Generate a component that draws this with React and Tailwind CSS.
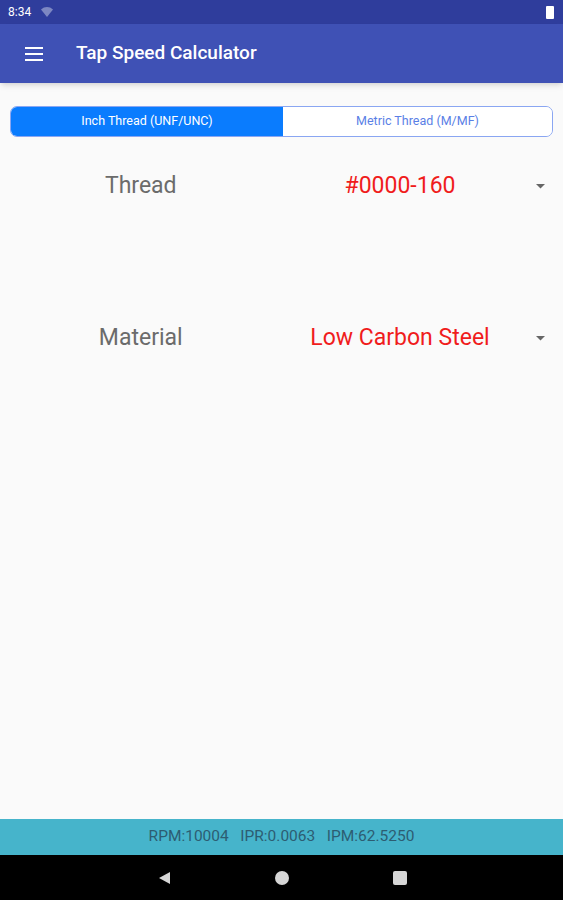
import React, { useState } from "react";

const font = { fontFamily: "Roboto, 'Noto Sans', sans-serif" };

const Row = ({ label, value, className }) => (
  <div className={`flex items-center h-[50px] ${className}`}>
    <div className="w-1/2 text-center text-[23px] text-[#6b6b6b]">{label}</div>
    <div className="w-1/2 flex items-center">
      <div className="w-[237px] text-center text-[23px] text-[#f01c1c]">{value}</div>
      <svg width="9" height="5" viewBox="0 0 9 5" className="ml-[17px]">
        <path d="M0 0h9L4.5 4.5z" fill="#666" />
      </svg>
    </div>
  </div>
);

const App = () => {
  const [metric, setMetric] = useState(false);

  return (
    <div className="w-[563px] h-[900px] flex flex-col bg-[#fafafa]" style={font}>
      <div className="h-6 bg-[#2f3d9c] flex items-center justify-between px-2 text-white text-[12px]">
        <div className="flex items-center gap-[10px]">
          <span>8:34</span>
          <svg width="12" height="10" viewBox="0 0 12 10">
            <path d="M0 2.5C3.5-0.8 8.5-0.8 12 2.5L6 10z" fill="#7d87c2" />
          </svg>
        </div>
        <div className="w-[8px] h-[13px] bg-white rounded-[1px] mr-[1px]"></div>
      </div>
      <div className="h-[59px] bg-[#3f51b5] flex items-center shadow-md">
        <svg width="18" height="14" viewBox="0 0 18 14" className="ml-[25px]">
          <path d="M0 1h18M0 7h18M0 13h18" stroke="#fff" strokeWidth="2" />
        </svg>
        <div className="ml-[33px] text-white text-[19px] font-medium">Tap Speed Calculator</div>
      </div>

      <div className="flex-1 flex flex-col">
        <div className="mx-[10px] mt-[23px] h-[31px] flex rounded-[7px] border border-[#8aa6f2] overflow-hidden text-[12.5px]">
          <button
            onClick={() => setMetric(false)}
            className={`w-[272px] ${!metric ? "bg-[#0a7cfe] text-white" : "bg-white text-[#5a7fe6]"}`}
          >
            Inch Thread (UNF/UNC)
          </button>
          <button
            onClick={() => setMetric(true)}
            className={`flex-1 ${metric ? "bg-[#0a7cfe] text-white" : "bg-white text-[#5a7fe6]"}`}
          >
            Metric Thread (M/MF)
          </button>
        </div>
        <Row label="Thread" value="#0000-160" className="mt-[24px]" />
        <Row label="Material" value="Low Carbon Steel" className="mt-[102px]" />
      </div>

      <div className="h-[36px] bg-[#46b4cb] flex items-center justify-center text-[15.5px] text-[#2d5d72]">
        RPM:10004&nbsp;&nbsp;&nbsp;IPR:0.0063&nbsp;&nbsp;&nbsp;IPM:62.5250
      </div>
      <div className="h-[45px] bg-black flex items-center justify-center gap-[104px]">
        <svg width="14" height="14" viewBox="0 0 14 14">
          <path d="M13 1v12L2 7z" fill="#d6d6d6" />
        </svg>
        <div className="w-[14px] h-[14px] rounded-full bg-[#d6d6d6]"></div>
        <div className="w-[14px] h-[14px] rounded-[2px] bg-[#d6d6d6]"></div>
      </div>
    </div>
  );
};

export default App;
